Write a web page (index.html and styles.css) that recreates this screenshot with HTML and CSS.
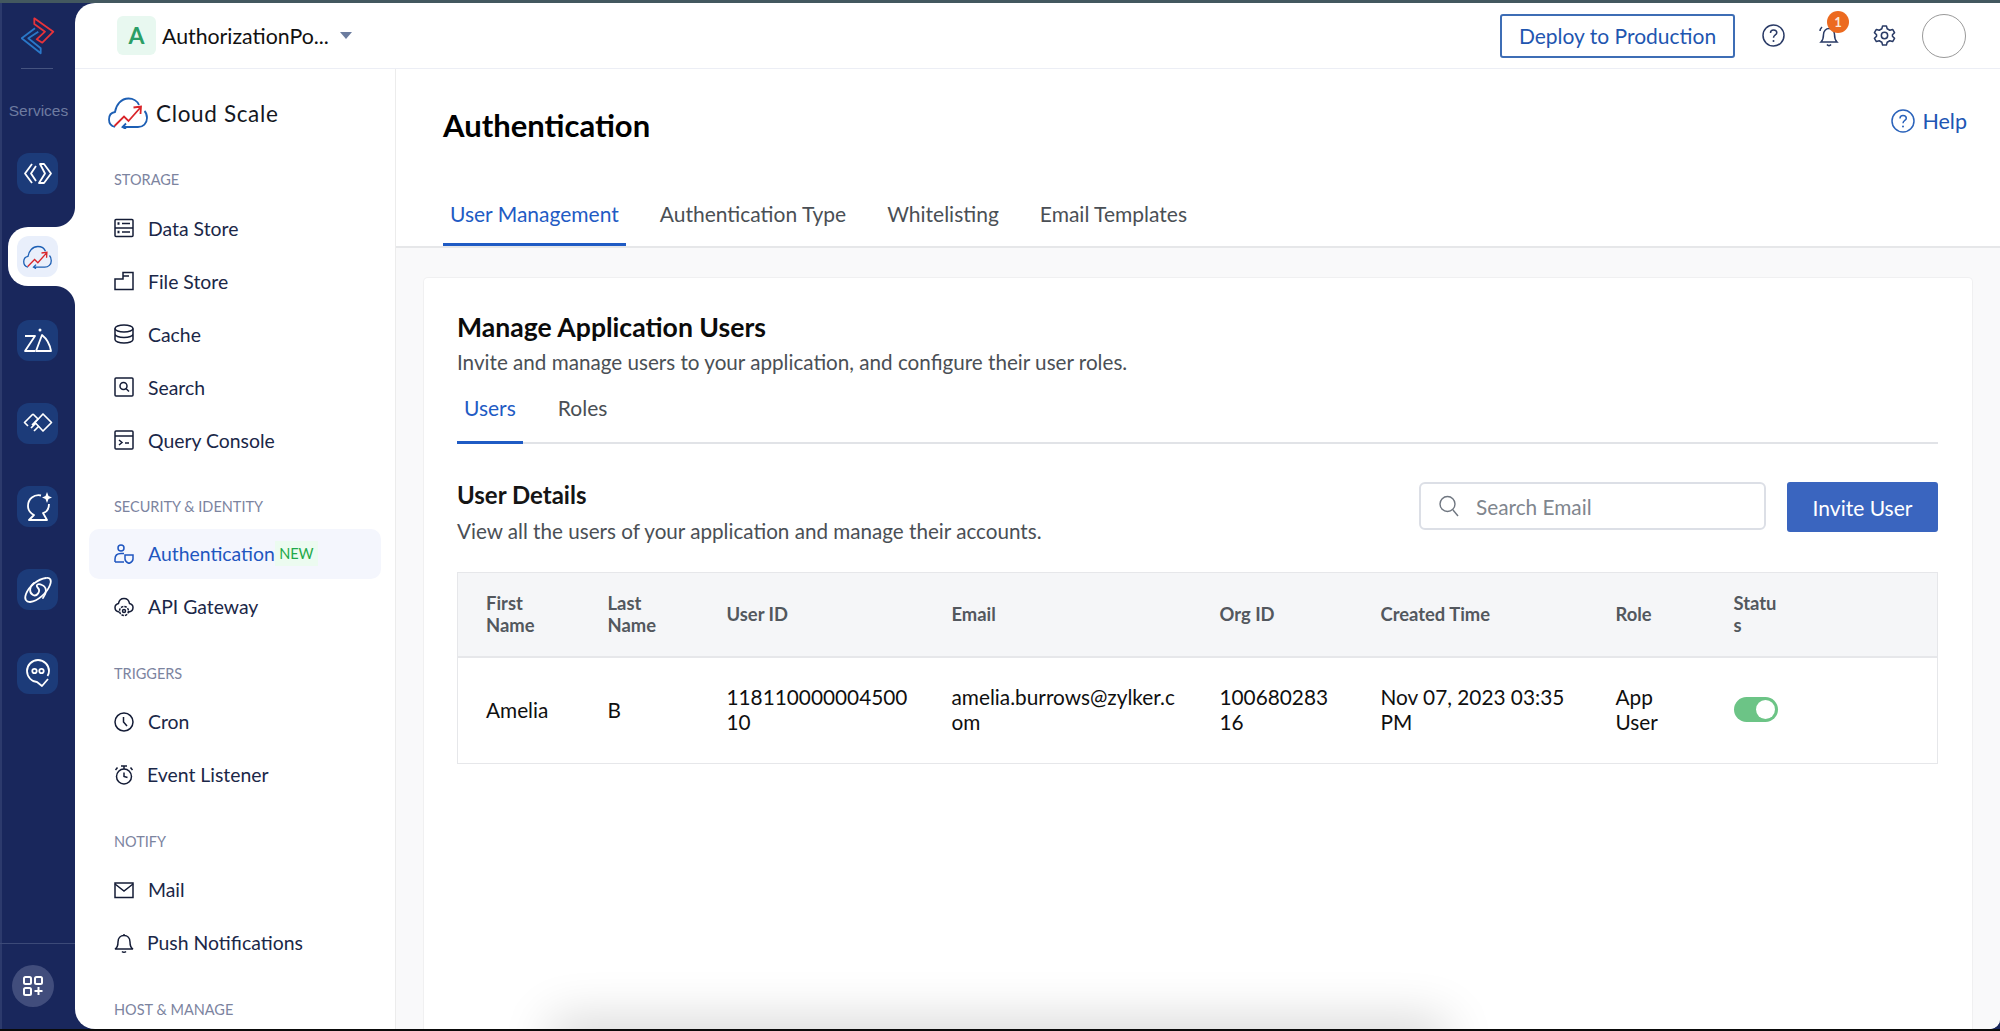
FILE: index.html
```html
<!DOCTYPE html>
<html lang="en">
<head>
    <meta charset="UTF-8">
    <title>Authentication - Cloud Scale</title>
    <link rel="stylesheet" href="styles.css">
</head>
<body>

    <svg class="sprite" width="0" height="0">
        <symbol id="cloud" viewBox="0 0 40 32">
            <path d="M7 30C3 29 1 26 1 22.500C1 18 3.500 15.500 7 15C8 8 13 1.500 20.500 1.500C25 1.500 29.500 4 31 8" fill="none" stroke="#1d5fb4" stroke-width="1.800"/>
            <path d="M36.500 14C38.500 16 39 18.500 39 21C39 26.500 35 30 30 30H15M18 26.500L14.500 30L18 32" fill="none" stroke="#1d5fb4" stroke-width="1.800"/>
            <path d="M6.500 29L16 19.500L20.500 24L32 11M25.500 10.500L33 9.500L32.500 17" fill="none" stroke="#d9252a" stroke-width="1.800"/>
        </symbol>
    </svg>

    <div class="top-strip"></div>

    <div class="frame">
        <nav class="rail">
            <svg class="rail-logo" width="34" height="38" viewBox="0 0 34 38" fill="none" stroke-width="1.800" stroke-linejoin="round">
                <path d="M13.300 1.300L32.300 14.700L21.300 25.700L15.700 22.300L24 14.700L13.300 7Z" stroke="#e8333a"/>
                <path d="M14 11.300L0.700 21.300L19.700 36.300V31.300L7.300 21.300L17.300 14.700" stroke="#2a78c8"/>
            </svg>
            <div class="rail-divider"></div>
            <div class="rail-label">Services</div>

            <div class="rail-items">
                <div class="rail-tile">
                    <svg width="30" height="30" viewBox="0 0 30 30" fill="none" stroke="#fff" stroke-width="1.800" stroke-linejoin="round">
                        <path d="M9 5L2 14.500L9 24M13 7L8 14.500L13 22"/>
                        <path d="M17 5H21L28 14.500L21 24H16L22 14.500Z"/>
                    </svg>
                </div>
                <div class="rail-active">
                    <div class="rail-tile active">
                        <svg width="29" height="24"><use href="#cloud"/></svg>
                    </div>
                </div>
                <div class="rail-tile">
                    <svg width="30" height="30" viewBox="0 0 30 30" fill="none" stroke="#fff" stroke-width="1.800" stroke-linejoin="round">
                        <path d="M2 11H12L2 26H12"/>
                        <circle cx="17" cy="5" r="1.500" fill="#fff" stroke="none"/>
                        <path d="M19 10L13 26H28C27 20 24 14 19 10Z"/>
                    </svg>
                </div>
                <div class="rail-tile">
                    <svg width="30" height="30" viewBox="0 0 30 30" fill="none" stroke="#fff" stroke-width="1.700" stroke-linejoin="round">
                        <path d="M10 6L1.500 14.500L5 18M10 6L15 11L9 17M8 20L13 15M11 23L16 18"/>
                        <path d="M20 6L28.500 14.500L20 23L12 14.500Z"/>
                    </svg>
                </div>
                <div class="rail-tile">
                    <svg width="30" height="30" viewBox="0 0 30 30" fill="none" stroke="#fff" stroke-width="1.800" stroke-linejoin="round">
                        <path d="M18 3.500C11 2 5 7 5 14C5 18 7 21 11 23L6 28H24L20 21C24 20 26 16 26 12"/>
                        <path d="M24 0L25.500 4L29 5.500L25.500 7L24 11L22.500 7L19 5.500L22.500 4Z" fill="#fff" stroke="none"/>
                    </svg>
                </div>
                <div class="rail-tile">
                    <svg width="30" height="30" viewBox="0 0 30 30" fill="none" stroke="#fff" stroke-width="1.800" stroke-linecap="round">
                        <path d="M23 3C27 2 29 5 27 10C24 18 15 26 7 27C3 27 1 24 3 19C6 11 15 4 23 3Z"/>
                        <path d="M11 8C6 12 6 18 10 20C14 22 18 16 15 13C12 10 15 8 19 10C24 12 24 18 20 23"/>
                    </svg>
                </div>
                <div class="rail-tile">
                    <svg width="30" height="30" viewBox="0 0 30 30" fill="none" stroke="#fff" stroke-width="1.800" stroke-linejoin="round">
                        <path d="M24.500 18C26 16 26 14.500 26 13C26 7 21 2 15 2C9 2 4 7 4 13C4 19 9 24 14 24L19 28L25 21"/>
                        <circle cx="11.500" cy="13" r="2.200"/>
                        <circle cx="18.500" cy="13" r="2.200"/>
                    </svg>
                </div>
            </div>

            <div class="rail-bottom">
                <div class="rail-add">
                    <svg width="20" height="20" viewBox="0 0 20 20" fill="none" stroke="#fff" stroke-width="2">
                        <rect x="1" y="1" width="7" height="7" rx="1.500"/>
                        <rect x="12" y="1" width="7" height="7" rx="1.500"/>
                        <rect x="1" y="12" width="7" height="7" rx="1.500"/>
                        <path d="M15.500 11V19M11.500 15H19.500"/>
                    </svg>
                </div>
            </div>
        </nav>

        <div class="main">
            <header class="topbar">
                <div class="project-tile">A</div>
                <div class="project-name">AuthorizationPo...</div>
                <div class="project-arrow"></div>
                <div class="topbar-right">
                    <button class="deploy-btn">Deploy to Production</button>
                    <svg class="top-help" width="23" height="23" viewBox="0 0 23 23" fill="none" stroke="#2a3b66" stroke-width="1.500">
                        <circle cx="11.500" cy="11.500" r="10.500"/>
                        <path d="M8.500 9C8.500 7 10 6 11.500 6C13.500 6 14.800 7.300 14.800 8.800C14.800 11 11.500 11 11.500 13.800"/>
                        <circle cx="11.500" cy="17" r="1" fill="#2a3b66" stroke="none"/>
                    </svg>
                    <div class="bell-wrap">
                        <svg width="22" height="22" viewBox="0 0 22 22" fill="none" stroke="#2a3b66" stroke-width="1.500">
                            <path d="M3 17C5 15 5.500 13 5.500 9.500C5.500 6 8 3.500 11 3.500C14 3.500 16.500 6 16.500 9.500C16.500 13 17 15 19 17Z"/>
                            <path d="M9 19.500C10 21 12 21 13 19.500M2 6C2 4.500 3 3 4 2"/>
                        </svg>
                        <span class="bell-badge">1</span>
                    </div>
                    <svg class="top-gear" width="23" height="23" viewBox="0 0 24 24" fill="none" stroke="#2a3b66" stroke-width="1.600" stroke-linejoin="round">
                        <path d="M10 2H14L14.800 5L17.500 6.500L20.500 5.700L22.500 9L20.300 11.200V12.800L22.500 15L20.500 18.300L17.500 17.500L14.800 19L14 22H10L9.200 19L6.500 17.500L3.500 18.300L1.500 15L3.700 12.800V11.200L1.500 9L3.500 5.700L6.500 6.500L9.200 5Z"/>
                        <circle cx="12" cy="12" r="3.300"/>
                    </svg>
                    <div class="avatar"></div>
                </div>
            </header>

            <div class="workspace">
                <aside class="sidebar">
                    <div class="brand">
                        <svg width="40" height="32"><use href="#cloud"/></svg>
                        <span>Cloud Scale</span>
                    </div>

                    <div class="side-heading first">STORAGE</div>
                    <a class="side-item">
                        <svg class="side-icon" viewBox="0 0 20 20"><rect x="1" y="1.500" width="18" height="17" rx="1"/><path d="M1 10H19M8 5.500H16M8 14H16"/><path d="M3.500 5.500H5.500M3.500 14H5.500" stroke-width="2.500"/></svg>
                        Data Store
                    </a>
                    <a class="side-item">
                        <svg class="side-icon" viewBox="0 0 20 20"><path d="M1 8H9V1.500H19V18.500H1ZM9 5H15"/></svg>
                        File Store
                    </a>
                    <a class="side-item">
                        <svg class="side-icon" viewBox="0 0 20 20"><ellipse cx="10" cy="4.500" rx="9" ry="3.500"/><path d="M1 4.500V15.500C1 17.500 5 19 10 19C15 19 19 17.500 19 15.500V4.500M1 10C1 12 5 13.500 10 13.500C15 13.500 19 12 19 10"/></svg>
                        Cache
                    </a>
                    <a class="side-item">
                        <svg class="side-icon" viewBox="0 0 20 20"><rect x="1" y="1" width="18" height="18" rx="1"/><circle cx="9.500" cy="9" r="3.500"/><path d="M12 11.500L15 14.500"/></svg>
                        Search
                    </a>
                    <a class="side-item">
                        <svg class="side-icon" viewBox="0 0 20 20"><rect x="1" y="1" width="18" height="18" rx="1"/><path d="M1 6H19M5 10L8 12.500L5 15M11 13H15"/></svg>
                        Query Console
                    </a>

                    <div class="side-heading">SECURITY &amp; IDENTITY</div>
                    <a class="side-item active">
                        <svg class="side-icon" viewBox="0 0 20 20"><circle cx="7" cy="4" r="3"/><path d="M1 18V15C1 11.500 3.500 9.500 7 9.500H10M10 18H1"/><path d="M11 11H19V15C19 17 17 18.500 15 19.500C13 18.500 11 17 11 15Z"/></svg>
                        Authentication
                        <span class="new-badge">NEW</span>
                    </a>
                    <a class="side-item">
                        <svg class="side-icon" viewBox="0 0 20 20"><path d="M5 15C2.500 14.500 1 12.500 1 10.500C1 8.500 2.500 7 4.500 6.500C5 3.500 7.300 1.500 10 1.500C12.700 1.500 15 3.500 15.500 6.500C17.500 7 19 8.500 19 10.500C19 12.500 17.500 14.500 15 15"/><circle cx="10" cy="14" r="4.500" stroke-dasharray="2.500 1"/><circle cx="10" cy="14" r="1.500"/></svg>
                        API Gateway
                    </a>

                    <div class="side-heading">TRIGGERS</div>
                    <a class="side-item">
                        <svg class="side-icon" viewBox="0 0 20 20"><circle cx="10" cy="10" r="9"/><path d="M9.500 5V10L13 14"/></svg>
                        Cron
                    </a>
                    <a class="side-item tight">
                        <svg class="side-icon" viewBox="0 0 20 20"><circle cx="10" cy="11.500" r="7.500"/><path d="M7 1H13M10 1V4M10 7.500V11.500L13.500 12.500M1.500 5L3.500 2.500M18.500 5L16.500 2.500"/></svg>
                        Event Listener
                    </a>

                    <div class="side-heading">NOTIFY</div>
                    <a class="side-item">
                        <svg class="side-icon" viewBox="0 0 20 20"><rect x="1" y="3" width="18" height="14.500"/><path d="M1 4L10 11L19 4"/></svg>
                        Mail
                    </a>
                    <a class="side-item tight">
                        <svg class="side-icon" viewBox="0 0 20 20"><path d="M1 16C3 15 4 13 4 9C4 5 6.500 2.500 10 2.500C13.500 2.500 16 5 16 9C16 13 17 15 19 16ZM10 1V2.500M8 18.500C9 19.500 11 19.500 12 18.500"/></svg>
                        Push Notifications
                    </a>

                    <div class="side-heading">HOST &amp; MANAGE</div>
                </aside>

                <main class="content">
                    <div class="page-head">
                        <div class="title-row">
                            <h1>Authentication</h1>
                            <a class="help-link">
                                <svg width="24" height="24" viewBox="0 0 24 24" fill="none" stroke="#2b63bb" stroke-width="1.500">
                                    <circle cx="12" cy="12" r="11"/>
                                    <path d="M9 9.500C9 7.500 10.500 6.500 12 6.500C14 6.500 15.300 7.800 15.300 9.300C15.300 11.500 12 11.500 12 14.300"/>
                                    <circle cx="12" cy="17.500" r="1" fill="#2b63bb" stroke="none"/>
                                </svg>
                                Help
                            </a>
                        </div>
                        <div class="tabs">
                            <a class="tab active">User Management</a>
                            <a class="tab">Authentication Type</a>
                            <a class="tab">Whitelisting</a>
                            <a class="tab">Email Templates</a>
                        </div>
                    </div>

                    <div class="page-body">
                        <section class="card">
                            <h2>Manage Application Users</h2>
                            <p class="card-sub">Invite and manage users to your application, and configure their user roles.</p>

                            <div class="subtabs">
                                <a class="subtab active">Users</a>
                                <a class="subtab">Roles</a>
                            </div>

                            <div class="details-head">
                                <div>
                                    <h3>User Details</h3>
                                    <p>View all the users of your application and manage their accounts.</p>
                                </div>
                                <div class="details-actions">
                                    <div class="search-box">
                                        <svg width="22" height="24" viewBox="0 0 22 24" fill="none" stroke="#6f7680" stroke-width="1.400">
                                            <circle cx="9.500" cy="10" r="7.500"/>
                                            <path d="M15 16L20 22"/>
                                        </svg>
                                        <span>Search Email</span>
                                    </div>
                                    <button class="invite-btn">Invite User</button>
                                </div>
                            </div>

                            <table class="users-table">
                                <thead>
                                    <tr>
                                        <th class="col-first">First Name</th>
                                        <th class="col-last">Last Name</th>
                                        <th class="col-id">User ID</th>
                                        <th class="col-email">Email</th>
                                        <th class="col-org">Org ID</th>
                                        <th class="col-created">Created Time</th>
                                        <th class="col-role">Role</th>
                                        <th><div class="status-label">Status</div></th>
                                    </tr>
                                </thead>
                                <tbody>
                                    <tr>
                                        <td>Amelia</td>
                                        <td>B</td>
                                        <td>11811000000450010</td>
                                        <td>amelia.burrows@zylker.com</td>
                                        <td class="cell-org">10068028316</td>
                                        <td>Nov 07, 2023 03:35 PM</td>
                                        <td class="cell-role">App User</td>
                                        <td><div class="toggle"><span class="knob"></span></div></td>
                                    </tr>
                                </tbody>
                            </table>

                            <div class="bottom-shade"></div>
                        </section>
                    </div>
                </main>
            </div>
        </div>
    </div>

    <div class="bottom-strip"></div>

</body>
</html>
```

FILE: styles.css
```css
* {
    box-sizing: border-box;
}
html, body {
    height: 100%;
}
body {
    margin: 0;
    display: flex;
    flex-direction: column;
    overflow: hidden;
    background-color: #19275c;
    font-family: Lato, "Open Sans", sans-serif;
    font-size: 20.8px;
    color: #10182c;
}
.sprite {
    position: absolute;
}
.top-strip {
    flex: none;
    height: 3px;
    background-color: #43585f;
}
.bottom-strip {
    flex: none;
    height: 2px;
    background-color: #0a0a0a;
}
.frame {
    flex: 1;
    min-height: 0;
    display: flex;
}

/* Rail */
.rail {
    flex: none;
    width: 75px;
    display: flex;
    flex-direction: column;
    border-left: 2px solid #2c3a6c;
    background-color: #19275c;
}
.rail-logo {
    margin: 14px 0 0 19px;
}
.rail-divider {
    width: 32px;
    height: 1px;
    margin: 13px 0 0 19px;
    background-color: #45537f;
}
.rail-label {
    margin-top: 33px;
    text-align: center;
    font-family: "Liberation Sans", Arial, sans-serif;
    font-size: 15.500px;
    line-height: 18px;
    color: #6e7ba0;
}
.rail-items {
    margin-top: 33px;
    display: flex;
    flex-direction: column;
    gap: 42.300px;
    padding-left: 15px;
}
.rail-tile {
    width: 41px;
    height: 41px;
    border-radius: 12px;
    background-color: #1c3b79;
    display: flex;
    align-items: center;
    justify-content: center;
}
.rail-tile.active {
    background-color: #e9effb;
}
.rail-active {
    position: relative;
    width: 67px;
    height: 59px;
    margin: -9px -8px -9px -9px;
    padding: 9px 0 0 9px;
    background-color: #fff;
    border-radius: 20px 0 0 20px;
}
.rail-active::before,
.rail-active::after {
    content: "";
    position: absolute;
    right: 0;
    width: 20px;
    height: 20px;
    background: radial-gradient(circle at 0 0, #19275c 19.500px, #fff 20.500px);
}
.rail-active::before {
    top: -20px;
}
.rail-active::after {
    bottom: -20px;
    background: radial-gradient(circle at 0 100%, #19275c 19.500px, #fff 20.500px);
}
.rail-bottom {
    margin-top: auto;
    height: 86px;
    margin-left: -2px;
    padding: 21px 0 0 12px;
    border-top: 1px solid #3c4a78;
}
.rail-add {
    width: 42px;
    height: 42px;
    border-radius: 50%;
    background-color: #414d7c;
    display: flex;
    align-items: center;
    justify-content: center;
}

/* Main frame */
.main {
    flex: 1;
    min-width: 0;
    display: flex;
    flex-direction: column;
    overflow: hidden;
    background-color: #fff;
    border-radius: 20px 0 10px 20px;
}
.topbar {
    flex: none;
    height: 66px;
    display: flex;
    align-items: center;
    padding: 0 0 0 42px;
    border-bottom: 1px solid #eceef5;
}
.project-tile {
    width: 39px;
    height: 39px;
    border-radius: 6px;
    background-color: #e8f8f0;
    color: #2b9e66;
    font-size: 23px;
    font-weight: 700;
    text-align: center;
    line-height: 39px;
}
.project-name {
    margin-left: 6px;
    font-size: 21.300px;
    color: #111;
}
.project-arrow {
    width: 0;
    height: 0;
    margin: 0 0 0 11px;
    border-left: 6px solid transparent;
    border-right: 6px solid transparent;
    border-top: 7px solid #6b7c9f;
}
.topbar-right {
    margin-left: auto;
    display: flex;
    align-items: center;
}
.deploy-btn {
    width: 235px;
    height: 44px;
    padding: 0;
    border: 2px solid #3d6db5;
    border-radius: 3px;
    background-color: #fff;
    color: #1f56b0;
    font-family: inherit;
    font-size: 21px;
}
.top-help {
    margin-left: 27px;
}
.bell-wrap {
    position: relative;
    width: 22px;
    height: 22px;
    margin-left: 33px;
}
.bell-badge {
    position: absolute;
    top: -14px;
    left: 9px;
    width: 22px;
    height: 22px;
    border-radius: 50%;
    background-color: #ec6a1f;
    color: #fde9d8;
    font-size: 13px;
    font-weight: 700;
    text-align: center;
    line-height: 22px;
}
.top-gear {
    margin-left: 33px;
}
.avatar {
    width: 44px;
    height: 44px;
    margin: 0 34px 0 26px;
    border: 1.500px solid #9a9a9a;
    border-radius: 50%;
}

/* Workspace */
.workspace {
    flex: 1;
    min-height: 0;
    display: flex;
}
.sidebar {
    flex: none;
    width: 321px;
    padding: 0 14px;
    overflow: hidden;
    border-right: 1px solid #ececec;
}
.brand {
    display: flex;
    align-items: center;
    gap: 8px;
    height: 32px;
    margin: 28px 0 0 19px;
    font-size: 22.500px;
    letter-spacing: 0.650px;
    color: #14181f;
}
.side-heading {
    height: 20px;
    margin: 30.500px 0 11.500px 25px;
    font-size: 14.500px;
    line-height: 20px;
    color: #7c849f;
}
.side-heading.first {
    margin-top: 41px;
}
.side-item {
    display: flex;
    align-items: center;
    height: 53px;
    padding-left: 25px;
    font-size: 19.400px;
    color: #1b2748;
}
.side-item.active {
    height: 50px;
    margin: 1.500px 0;
    border-radius: 10px;
    background-color: #f4f6fd;
    color: #1f56c0;
}
.side-item.tight .side-icon {
    margin-right: 13px;
}
.side-icon {
    flex: none;
    width: 20px;
    height: 20px;
    margin-right: 14px;
    fill: none;
    stroke: #141c36;
    stroke-width: 1.500;
}
.side-item.active .side-icon {
    stroke: #1f56c0;
}
.new-badge {
    width: 43px;
    height: 25px;
    background-color: #ecfbf0;
    color: #1ea94a;
    font-size: 14.500px;
    line-height: 25px;
    text-align: center;
}

/* Content */
.content {
    flex: 1;
    min-width: 0;
    display: flex;
    flex-direction: column;
}
.page-head {
    flex: none;
    height: 179px;
    padding: 0 33px 0 47px;
    border-bottom: 2px solid #e6e7e9;
}
.title-row {
    display: flex;
    justify-content: space-between;
    align-items: center;
    height: 112px;
}
h1 {
    margin: 0;
    font-size: 31px;
    font-weight: 700;
    color: #000;
}
.help-link {
    display: flex;
    align-items: center;
    gap: 7px;
    margin-bottom: 8px;
    color: #2056b4;
    font-size: 21.500px;
}
.tabs {
    display: flex;
    gap: 27px;
    height: 65px;
}
.tab {
    height: 65px;
    padding: 19.500px 7px 0;
    font-size: 21px;
    color: #4a4f55;
}
.tab.active {
    color: #1f5bc4;
    border-bottom: 3px solid #1f5bc4;
}
.page-body {
    flex: 1;
    min-height: 0;
    padding: 29px 27px 0 27px;
    background-color: #f9f9fa;
}
.card {
    position: relative;
    height: 100%;
    padding: 34px 34px 0 33px;
    overflow: hidden;
    background-color: #fff;
    border: 1px solid #f0f0f1;
    border-bottom: 0;
    border-radius: 5px 5px 0 0;
}
h2 {
    margin: 0;
    font-size: 26.600px;
    line-height: 30px;
    font-weight: 700;
    color: #0b0b0b;
}
.card-sub {
    margin: 8px 0 0;
    font-size: 20.650px;
    line-height: 24px;
    color: #4a4f55;
}
.subtabs {
    display: flex;
    gap: 28px;
    height: 59px;
    margin-top: 11px;
    border-bottom: 2px solid #e1e3e7;
}
.subtab {
    height: 59px;
    padding: 10px 7px 0;
    font-size: 21px;
    color: #4a4f55;
}
.subtab.active {
    color: #1f5bc4;
    border-bottom: 3px solid #1f5bc4;
}
.details-head {
    display: flex;
    justify-content: space-between;
    margin-top: 37px;
}
h3 {
    margin: 0;
    font-size: 24px;
    line-height: 28px;
    font-weight: 700;
    color: #151515;
}
.details-head p {
    margin: 10px 0 0;
    font-size: 20.650px;
    line-height: 24px;
    color: #4a4f55;
}
.details-actions {
    display: flex;
    gap: 21px;
    margin-top: 1px;
}
.search-box {
    display: flex;
    align-items: center;
    gap: 16px;
    width: 347px;
    height: 48px;
    padding-left: 17px;
    border: 2px solid #dcdfe6;
    border-radius: 6px;
    color: #80868e;
}
.invite-btn {
    width: 151px;
    height: 50px;
    padding: 0;
    border: 0;
    border-radius: 3px;
    background-color: #3a65bf;
    color: #fff;
    font-family: inherit;
    font-size: 21px;
}
.users-table {
    width: 100%;
    margin-top: 29px;
    table-layout: fixed;
    border-collapse: collapse;
    border: 1px solid #e6e7ea;
}
.users-table th {
    height: 84px;
    padding: 0 20px 0 28px;
    text-align: left;
    font-size: 18.400px;
    line-height: 22.500px;
    font-weight: 700;
    color: #53585e;
    background-color: #f5f6f8;
    border-bottom: 2px solid #e6e7ea;
}
.users-table td {
    height: 107px;
    padding: 0 10px 2px 28px;
    line-height: 25px;
    color: #0f0f0f;
    word-break: break-all;
}
.users-table td.cell-org {
    padding-right: 20px;
}
.users-table td.cell-role {
    padding-right: 20px;
    word-break: normal;
}
.col-first {
    width: 122px;
}
.col-last {
    width: 119px;
}
.col-id {
    width: 225px;
}
.col-email {
    width: 268px;
}
.col-org {
    width: 161px;
}
.col-created {
    width: 235px;
}
.col-role {
    width: 118px;
}
.status-label {
    width: 46px;
    word-break: break-all;
}
.toggle {
    position: relative;
    width: 44px;
    height: 25px;
    border-radius: 13px;
    background-color: #6cc486;
}
.knob {
    position: absolute;
    top: 3px;
    right: 3px;
    width: 19px;
    height: 19px;
    border-radius: 50%;
    background-color: #fff;
}
.bottom-shade {
    position: absolute;
    left: 137px;
    bottom: -30px;
    width: 875px;
    height: 30px;
    box-shadow: 0 0 50px 10px rgba(0, 0, 0, 0.16);
}
```
